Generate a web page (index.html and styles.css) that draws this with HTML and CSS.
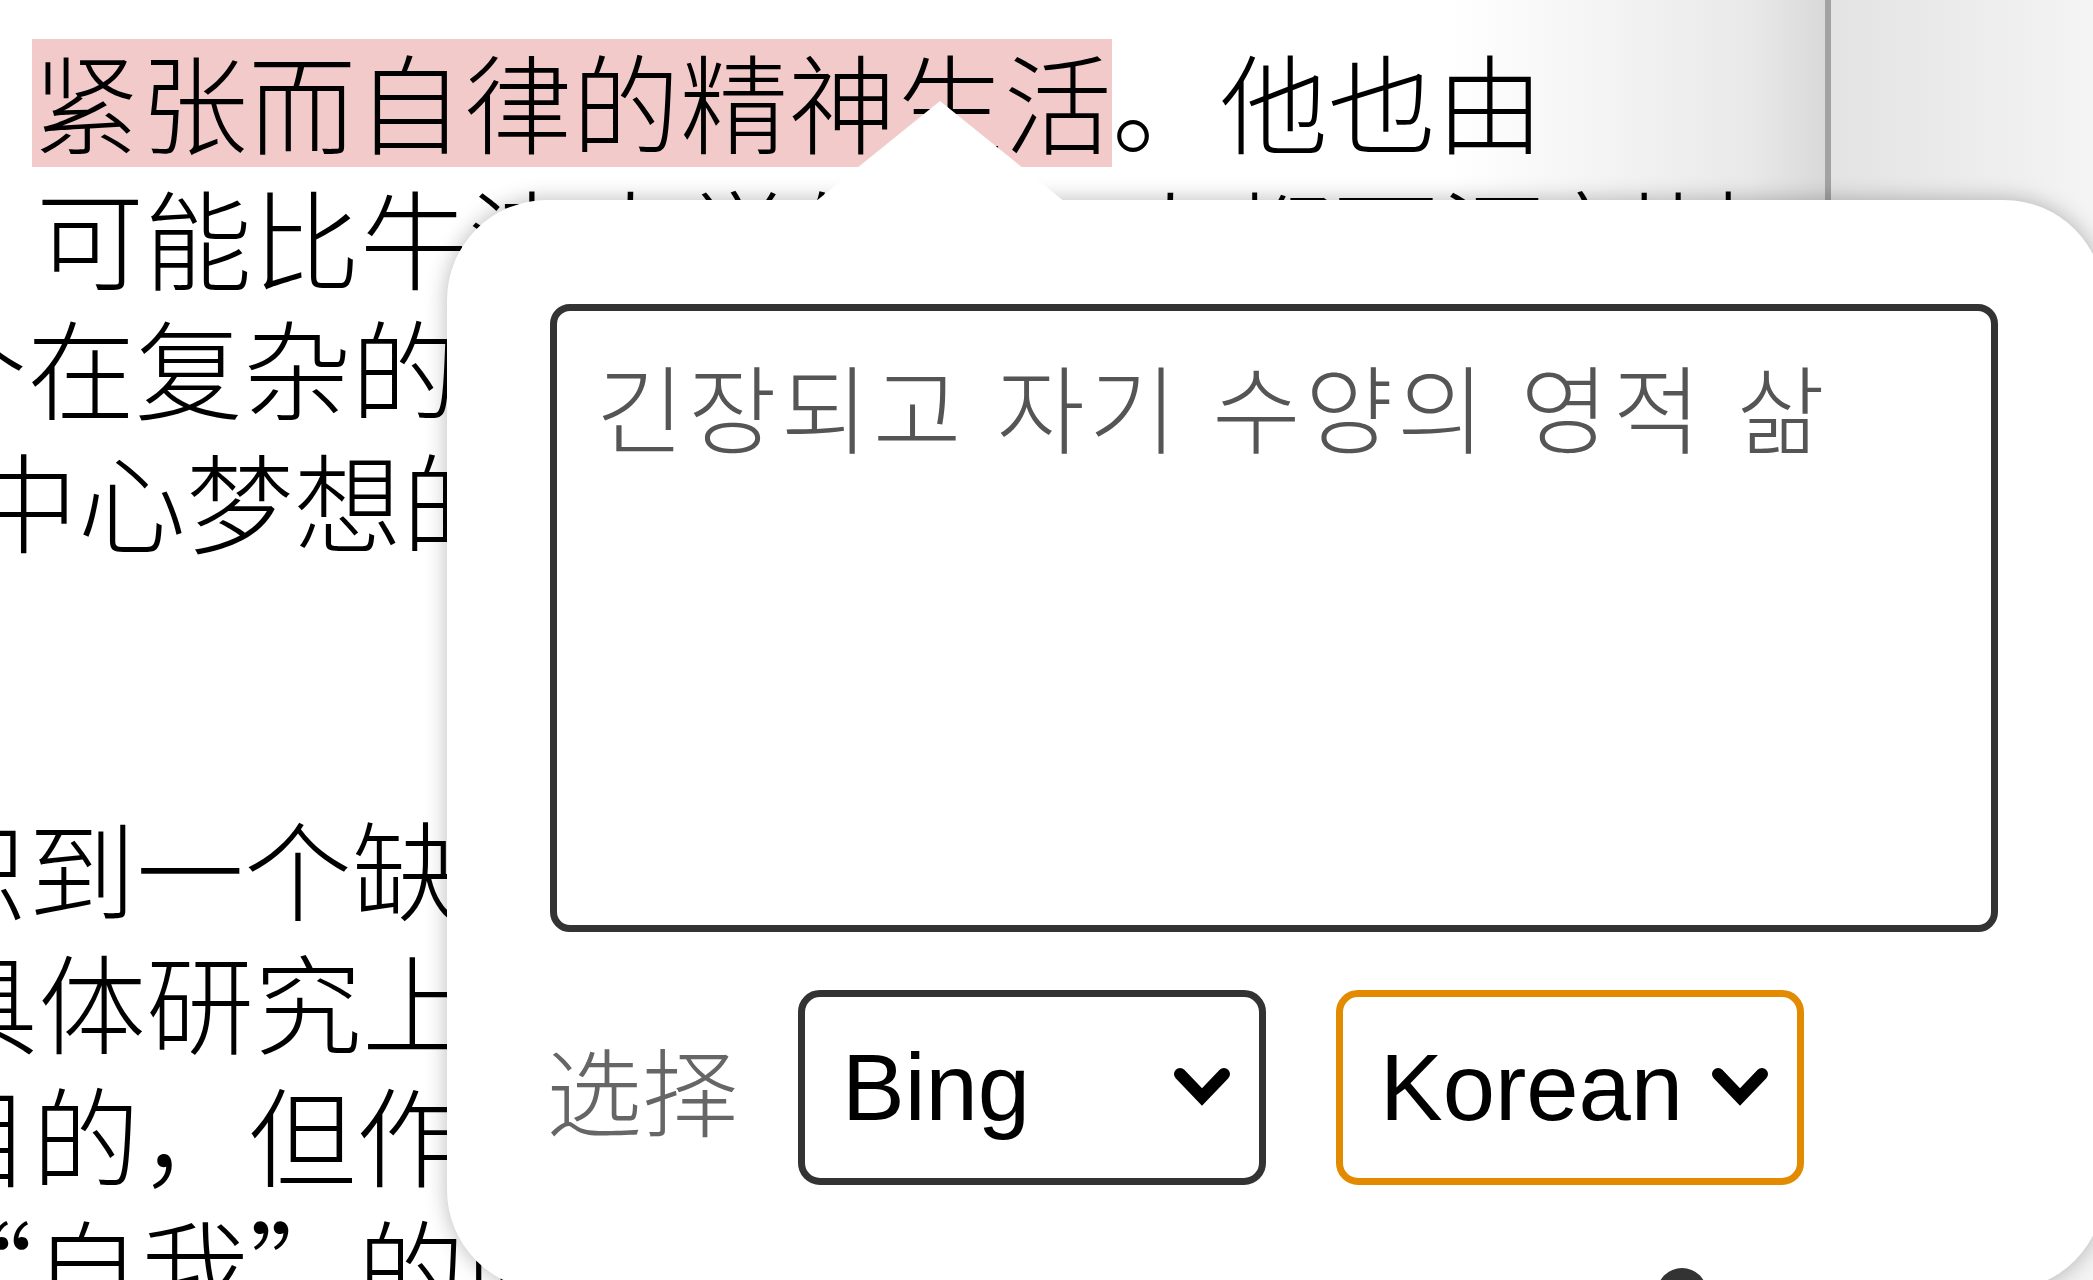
FILE: index.html
```html
<!DOCTYPE html>
<html lang="zh-CN">
<head>
<meta charset="utf-8">
<title>Translation popup</title>
<link rel="stylesheet" href="styles.css">
</head>
<body>
<div class="page">
  <main class="doc">
    <p class="para">
      <span class="line l1"><span class="hl">紧张而自律的精神生活</span>。他也由</span>
      <span class="line l2">可能比牛津大学的任何人都更深刻地</span>
      <span class="line l3">个在复杂的世界中寻找秩序的人，其</span>
      <span class="line l4">中心梦想的实现</span>
    </p>
    <p class="para p2">
      <span class="line m1">识到一个缺失的环节，那就是</span>
      <span class="line m2">具体研究上的进展，</span>
      <span class="line m3">目的，但作为</span>
      <span class="line m4">“自我”的问题</span>
    </p>
  </main>
  <aside class="sidebar"></aside>

  <div class="popup">
    <div class="popup-arrow"></div>
    <textarea class="result" spellcheck="false">긴장되고 자기 수양의 영적 삶</textarea>
    <div class="controls">
      <span class="label">选择</span>
      <div class="select-wrap">
        <select class="select"><option>Bing</option></select>
        <svg class="chev" viewBox="0 0 58 42" aria-hidden="true"><path d="M7 9 L29 32 L51 9" fill="none" stroke="#000" stroke-width="12" stroke-linecap="round" stroke-linejoin="miter"/></svg>
      </div>
      <div class="select-wrap active">
        <select class="select"><option>Korean</option></select>
        <svg class="chev" viewBox="0 0 58 42" aria-hidden="true"><path d="M7 9 L29 32 L51 9" fill="none" stroke="#000" stroke-width="12" stroke-linecap="round" stroke-linejoin="miter"/></svg>
      </div>
    </div>
    <div class="footer"><span class="dot"></span></div>
  </div>
</div>
</body>
</html>
```
FILE: styles.css
```css
html, body {
  margin: 0;
  padding: 0;
  background: #fff;
}
body {
  overflow: hidden;
}
.page {
  position: relative;
  display: flex;
  width: 2093px;
  height: 1280px;
  overflow: hidden;
}
.doc {
  flex: 0 0 1825px;
  box-sizing: border-box;
  padding-top: 33px;
  background: linear-gradient(to right, #ffffff 1450px, #f4f4f4 1600px, #e9e9e9 1750px, #d9d9d9 1825px);
  font-family: "Noto Sans CJK SC", "Noto Sans CJK JP", sans-serif;
  font-weight: 300;
  font-size: 108px;
  line-height: 133px;
  color: #000;
  overflow: hidden;
}
.para {
  margin: 0;
}
.p2 {
  margin-top: 235px;
}
.line {
  display: block;
  white-space: nowrap;
}
.l1 { margin-left: 32px; }
.l2 { margin-left: 36px; margin-top: 3px; }
.l3 { margin-left: -81px; margin-top: -3px; }
.l4 { margin-left: -30px; }
.m1 { margin-left: -80px; }
.m2 { margin-left: -70px; }
.m3 { margin-left: -76px; }
.m4 { margin-left: -75px; }
.hl {
  background: linear-gradient(#f3caca, #f3caca) 0 18px / 100% 128px no-repeat;
}
.sidebar {
  flex: 1;
  border-left: 6px solid #a3a3a3;
  background: linear-gradient(to right, #e3e3e3, #f4f4f4);
}

.popup {
  position: absolute;
  left: 447px;
  top: 200px;
  width: 1657px;
  height: 1090px;
  box-sizing: border-box;
  padding: 104px 106px 0 103px;
  background: #fff;
  border-radius: 100px;
  box-shadow: 0 0 22px rgba(0, 0, 0, 0.28);
}
.popup-arrow {
  position: absolute;
  left: 368px;
  top: -99px;
  width: 250px;
  height: 101px;
  background: #fff;
  clip-path: polygon(50% 0, 100% 100%, 0 100%);
}
.result {
  display: block;
  width: 100%;
  height: 628px;
  box-sizing: border-box;
  margin: 0;
  border: 7px solid #333;
  border-radius: 20px;
  padding: 34px 39px;
  resize: none;
  outline: none;
  background: #fff;
  color: #555;
  font-family: "Noto Sans CJK KR", "Noto Sans CJK SC", sans-serif;
  font-weight: 300;
  font-size: 96px;
  line-height: 120px;
  letter-spacing: 4px;
  word-spacing: 6px;
  overflow: hidden;
}
.controls {
  display: flex;
  align-items: center;
  height: 195px;
  margin-top: 58px;
}
.label {
  font-family: "Noto Sans CJK SC", sans-serif;
  font-weight: 300;
  font-size: 96px;
  line-height: 1;
  color: #666;
  margin-left: -4px;
  margin-right: 60px;
}
.select-wrap {
  position: relative;
  width: 468px;
  height: 195px;
}
.select-wrap + .select-wrap {
  margin-left: 70px;
}
.select {
  -webkit-appearance: none;
  appearance: none;
  display: block;
  width: 100%;
  height: 100%;
  box-sizing: border-box;
  margin: 0;
  border: 7px solid #333;
  border-radius: 22px;
  padding: 0 0 0 37px;
  background: #fff;
  color: #000;
  font-family: "Liberation Sans", Arial, sans-serif;
  font-size: 94px;
  outline: none;
}
.select-wrap.active .select {
  border-color: #e38b00;
}
.chev {
  position: absolute;
  right: 35px;
  top: 50%;
  width: 58px;
  height: 42px;
  margin-top: -23px;
  pointer-events: none;
}
.footer {
  margin-top: 83px;
  padding-left: 1107px;
}
.dot {
  display: block;
  width: 50px;
  height: 50px;
  border-radius: 50%;
  background: #333;
}
```
